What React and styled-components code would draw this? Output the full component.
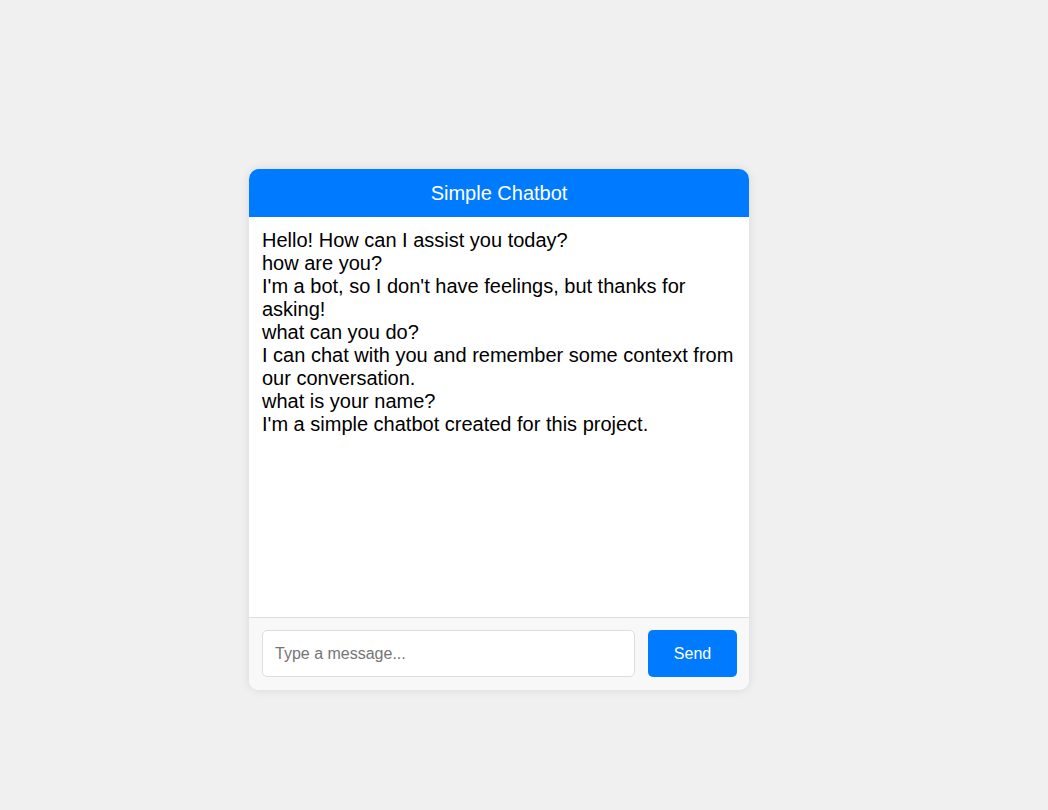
import React from "react";
import styled, { createGlobalStyle } from "styled-components";

const Global = createGlobalStyle`
  html, body { margin: 0; padding: 0; background: #f0f0f0; }
  body { font-family: "Liberation Sans", Arial, sans-serif; }
`;

const Page = styled.div`
  padding: 169px 0 0 249px;
  min-height: 810px;
  box-sizing: border-box;
`;

const Chat = styled.div`
  width: 500px;
  background: #fff;
  border-radius: 10px;
  box-shadow: 0 0 10px rgba(0, 0, 0, 0.1);
  overflow: hidden;
  display: flex;
  flex-direction: column;
`;

const Header = styled.div`
  background: #007bff;
  color: #fff;
  text-align: center;
  font-size: 20px;
  line-height: 24px;
  padding: 12px;
`;

const Messages = styled.div`
  height: 400px;
  box-sizing: border-box;
  padding: 12px 12px 12px 13px;
  font-size: 20px;
  line-height: 23px;
  color: #000;
  overflow-y: auto;
`;

const Line = styled.div``;

const InputBar = styled.div`
  display: flex;
  gap: 13px;
  padding: 12px 12px 13px 13px;
  border-top: 1px solid #ddd;
  background: #f8f8f8;
`;

const Input = styled.input`
  flex: 1;
  height: 47px;
  box-sizing: border-box;
  border: 1px solid #ddd;
  border-radius: 5px;
  padding: 0 12px;
  font-family: "Liberation Sans", Arial, sans-serif;
  font-size: 16px;
  background: #fff;
  outline: none;
  &::placeholder { color: #757575; }
`;

const SendButton = styled.button`
  width: 89px;
  height: 47px;
  border: none;
  border-radius: 5px;
  background: #007bff;
  color: #fff;
  font-family: "Liberation Sans", Arial, sans-serif;
  font-size: 16px;
  cursor: pointer;
`;

const lines = [
  "Hello! How can I assist you today?",
  "how are you?",
  "I'm a bot, so I don't have feelings, but thanks for asking!",
  "what can you do?",
  "I can chat with you and remember some context from our conversation.",
  "what is your name?",
  "I'm a simple chatbot created for this project.",
];

export default function App() {
  return (
    <>
      <Global />
      <Page>
        <Chat>
          <Header>Simple Chatbot</Header>
          <Messages>
            {lines.map((l, i) => (
              <Line key={i}>{l}</Line>
            ))}
          </Messages>
          <InputBar>
            <Input placeholder="Type a message..." />
            <SendButton>Send</SendButton>
          </InputBar>
        </Chat>
      </Page>
    </>
  );
}
